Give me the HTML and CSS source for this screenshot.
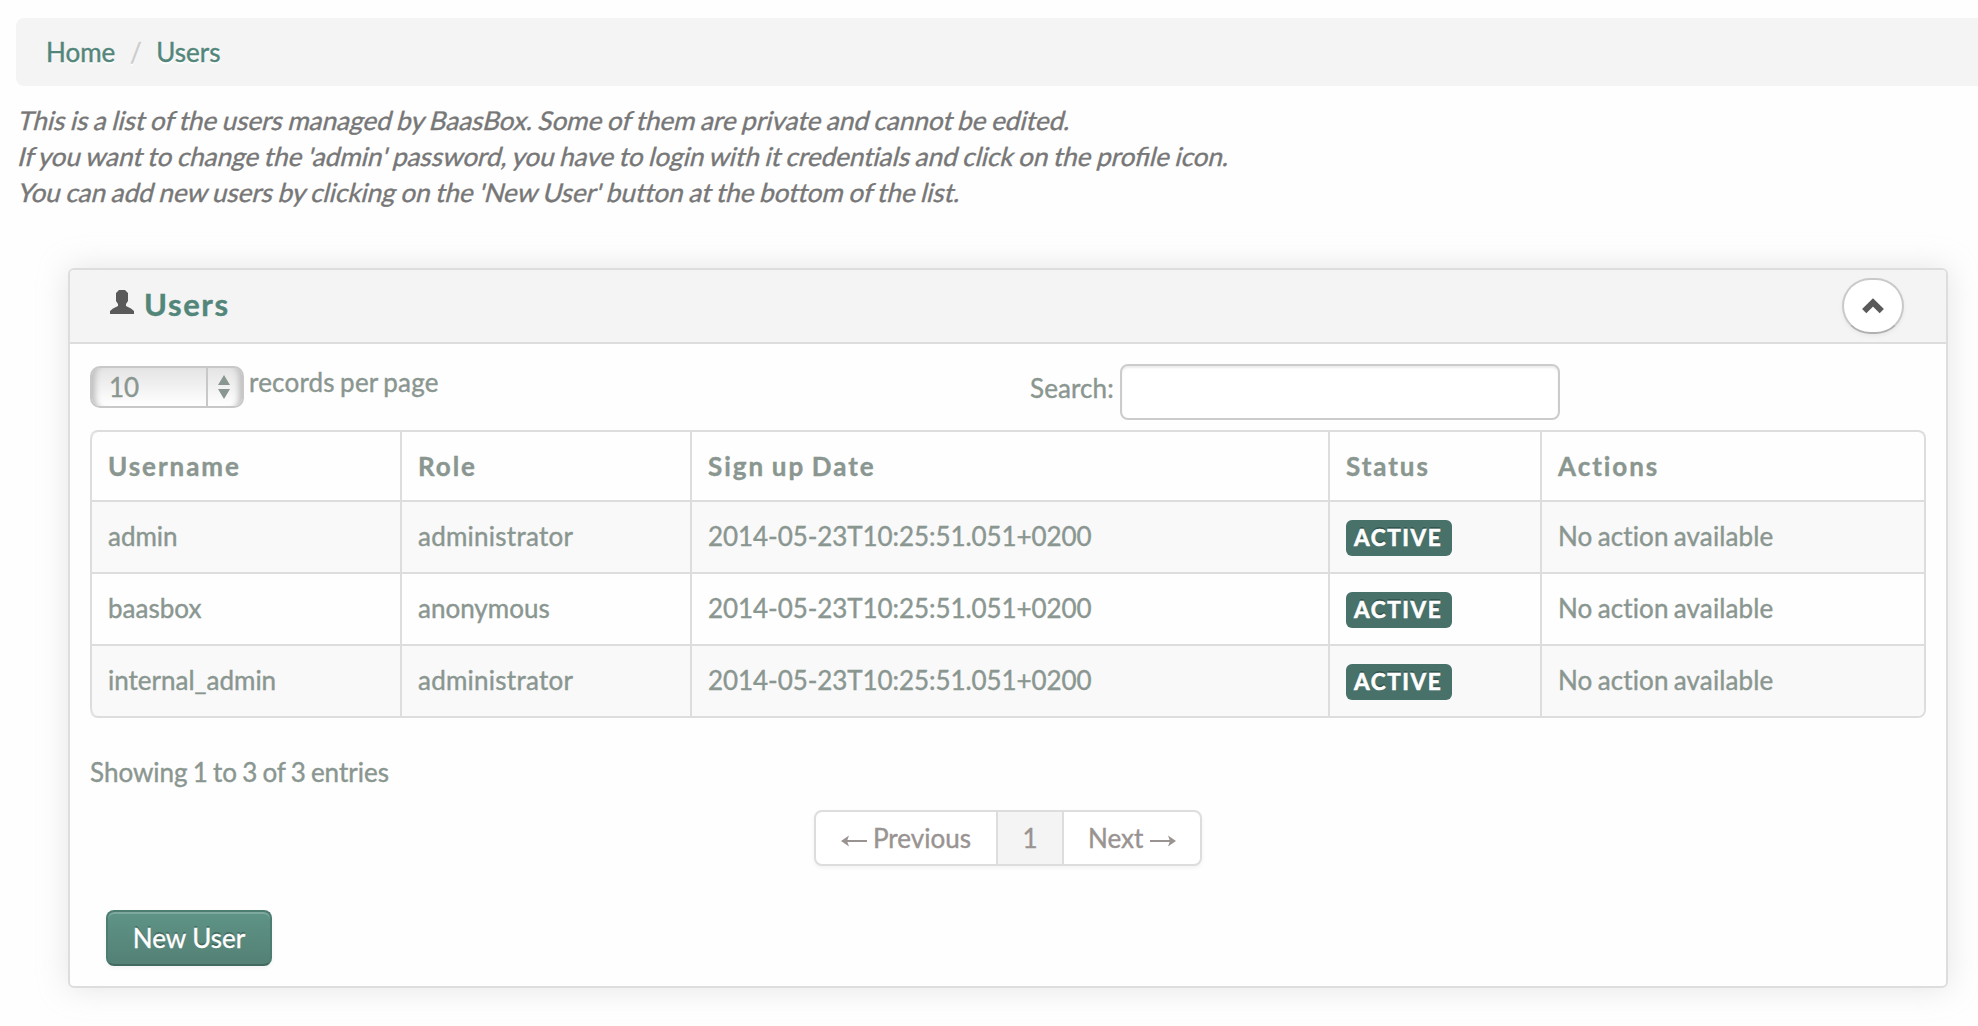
FILE: index.html
```html
<!DOCTYPE html>
<html lang="en">
<head>
<meta charset="utf-8">
<title>Users</title>
<link rel="stylesheet" href="styles.css">
</head>
<body>
<nav class="breadcrumb"><a href="#">Home</a><span class="divider">/</span><a href="#">Users</a></nav>
<p class="intro"><span>This is a list of the users managed by BaasBox. Some of them are private and cannot be edited.</span><span>If you want to change the 'admin' password, you have to login with it credentials and click on the <b>profile</b> icon.</span><span>You can add new users by clicking on the 'New User' button at the bottom of the list.</span></p>
<section class="box">
  <header class="box-header">
    <svg class="icon-user" viewBox="0 0 24 24" width="24" height="24"><path d="M9 0h6l3 3v8l-2 3v2l5 2.500 3 2.500v3H0v-3l3-2.500L8 16v-2l-2-3V3z"/></svg>
    <h2>Users</h2>
    <a class="btn-round" href="#"><svg viewBox="0 0 22 16" width="22" height="16"><path d="M2.200 13.200 11 4.400l8.800 8.800"/></svg></a>
  </header>
  <div class="box-content">
    <div class="controls">
      <div class="length"><span class="select"><span class="value">10</span><span class="arrows"><svg viewBox="0 0 12 24" width="12" height="24"><path d="M0 10 6 0l6 10zM0 14h12L6 24z"/></svg></span></span><span class="per-page">records per page</span></div>
      <label class="search"><span>Search:</span><input type="text"></label>
    </div>
    <table class="users">
      <colgroup><col class="c-name"><col class="c-role"><col class="c-date"><col class="c-status"><col></colgroup>
      <thead><tr><th>Username</th><th>Role</th><th>Sign up Date</th><th>Status</th><th>Actions</th></tr></thead>
      <tbody>
        <tr><td>admin</td><td class="role">administrator</td><td class="date">2014-05-23T10:25:51.051+0200</td><td><span class="label">ACTIVE</span></td><td class="action">No action available</td></tr>
        <tr><td>baasbox</td><td>anonymous</td><td class="date">2014-05-23T10:25:51.051+0200</td><td><span class="label">ACTIVE</span></td><td class="action">No action available</td></tr>
        <tr><td>internal_admin</td><td class="role">administrator</td><td class="date">2014-05-23T10:25:51.051+0200</td><td><span class="label">ACTIVE</span></td><td class="action">No action available</td></tr>
      </tbody>
    </table>
    <div class="info">Showing 1 to 3 of 3 entries</div>
    <div class="pagination">
      <a class="prev" href="#"><svg viewBox="0 0 26 12" width="26" height="12"><path class="shaft" d="M3 6h23"/><path d="M0 6 8 .5 6 6l2 5.500z"/></svg>Previous</a>
      <a class="current" href="#">1</a>
      <a class="next" href="#">Next<svg viewBox="0 0 26 12" width="26" height="12"><path class="shaft" d="M0 6h23"/><path d="M26 6 18 .5 20 6l-2 5.500z"/></svg></a>
    </div>
    <button class="btn-primary">New User</button>
  </div>
</section>
</body>
</html>
```
FILE: styles.css
```css
* { box-sizing: border-box; }
html { overflow: hidden; }
body {
  margin: 0;
  padding-top: 18px;
  height: 1026px;
  overflow: hidden;
  background: #fefefe;
  color: #8a9690;
  font: 26px/36px Lato, "Liberation Sans", sans-serif;
  font-variant-ligatures: none;
  word-spacing: -1.5px;
  -webkit-text-stroke: .4px currentColor;
}
a { color: inherit; text-decoration: none; }
.breadcrumb {
  display: flex;
  align-items: center;
  height: 68px;
  margin-left: 16px;
  padding-left: 30px;
  border-radius: 8px 0 0 8px;
  background: #f4f4f4;
  color: #53867a;
  text-shadow: 0 2px 0 #fff;
}
.divider { width: 41px; text-align: center; color: #ccc; }
.intro { margin: 16px 0 58px 17px; color: #777; white-space: nowrap; word-spacing: -1.100px; }
.intro span { display: block; transform: skewX(-14deg); transform-origin: 0 75%; }
.intro b { font-weight: inherit; font-variant-ligatures: normal; }
.box {
  width: 1880px;
  height: 720px;
  margin-left: 68px;
  border: 2px solid #ddd;
  border-radius: 6px;
  box-shadow: 0 0 30px rgba(189, 189, 189, .4);
}
.box-header {
  display: flex;
  height: 74px;
  padding: 8px 42px 0 39px;
  border-bottom: 2px solid #ddd;
  border-radius: 4px 4px 0 0;
  background: #f4f4f4;
}
.icon-user { margin-top: 12px; margin-left: 1px; fill: #5a5a5a; }
h2 { margin: 8px 0 0 10px; font-size: 31px; line-height: 36px; letter-spacing: 1.600px; color: #53867a; }
.btn-round {
  display: flex;
  align-items: center;
  justify-content: center;
  width: 62px;
  height: 56px;
  margin-left: auto;
  border: 2px solid #c9c9c9;
  border-bottom-color: #b0b0b0;
  border-radius: 28px;
  background: #fff;
  box-shadow: 0 2px 4px rgba(0, 0, 0, .05);
}
.btn-round path { fill: none; stroke: #5a5a5a; stroke-width: 6; }
.box-content { padding: 20px 20px 0; }
.controls { display: flex; height: 66px; }
.length { display: flex; width: 940px; }
.select {
  display: flex;
  width: 154px;
  height: 42px;
  margin-top: 2px;
  border: 2px solid #c8c8c8;
  border-radius: 10px;
  background: linear-gradient(#e4e4e4, #fff);
  box-shadow: inset 9px 0 6px -6px #bbb, inset -9px 0 6px -6px #bbb;
  line-height: 38px;
}
.value { width: 114px; padding-left: 17px; }
.arrows { display: flex; flex: 1; align-items: center; padding-left: 10px; border-left: 2px solid #c8c8c8; }
.arrows path { fill: #8a9690; }
.per-page { margin-left: 5px; letter-spacing: .2px; }
.search { display: flex; gap: 7px; line-height: 49px; }
.search input {
  width: 440px;
  height: 56px;
  border: 2px solid #ccc;
  border-radius: 8px;
  background: #fff;
  box-shadow: inset 0 2px 2px rgba(0, 0, 0, .075);
}
.search span { width: 83px; letter-spacing: .1px; }
.users {
  width: 1836px;
  table-layout: fixed;
  border-collapse: separate;
  border-spacing: 0;
  border: 2px solid #ddd;
  border-left: 0;
  border-radius: 8px;
}
.c-name { width: 310px; }
.c-role { width: 290px; }
.c-date { width: 638px; }
.c-status { width: 212px; }
.users th, .users td { padding: 0 16px; border-left: 2px solid #ddd; text-align: left; white-space: nowrap; }
.users th { height: 68px; letter-spacing: 1.950px; }
.users td { height: 72px; padding-bottom: 2px; border-top: 2px solid #ddd; }
.users tbody tr:nth-child(odd) td { background: #f9f9f9; }
.users .role { letter-spacing: .25px; }
.users .date { letter-spacing: -.07px; }
.users .action { letter-spacing: .12px; }
.users th:first-child { border-top-left-radius: 8px; }
.users tr:last-child td:first-child { border-bottom-left-radius: 8px; }
.users tr:last-child td:last-child { border-bottom-right-radius: 6px; }
.label {
  display: block;
  width: 106px;
  height: 36px;
  margin-top: 4px;
  padding-left: 8px;
  border-radius: 6px;
  background: #48716a;
  color: #fff;
  font-size: 22.500px;
  font-weight: bold;
  letter-spacing: 1.600px;
  line-height: 36px;
  text-shadow: 0 -2px 0 rgba(0, 0, 0, .25);
  -webkit-text-stroke: .6px #fff;
}
.info { margin-top: 36px; }
.pagination {
  display: flex;
  width: 388px;
  height: 56px;
  margin: 20px auto 44px;
  border: 2px solid #ddd;
  border-radius: 8px;
  background: #fff;
  color: #999391;
  box-shadow: 0 2px 4px rgba(0, 0, 0, .05);
  line-height: 52px;
  -webkit-text-stroke-color: #999391;
}
.pagination a { display: flex; align-items: center; }
.pagination svg { margin-top: 6px; fill: currentColor; }
.shaft { stroke: currentColor; stroke-width: 2; }
.prev { width: 180px; padding-left: 25px; gap: 6px; }
.current { justify-content: center; width: 68px; border: solid #ddd; border-width: 0 2px; background: #f4f4f4; }
.next { padding-left: 24px; gap: 7px; }
.btn-primary {
  display: block;
  width: 166px;
  height: 56px;
  margin-left: 16px;
  padding: 0;
  border: 2px solid #4d7d71;
  border-bottom-color: #41695f;
  border-radius: 8px;
  background: linear-gradient(#5e9486, #548075);
  box-shadow: inset 0 2px 0 rgba(255, 255, 255, .2), 0 2px 4px rgba(0, 0, 0, .05);
  color: #fff;
  font: inherit;
  text-shadow: 0 -2px 0 rgba(0, 0, 0, .25);
  -webkit-text-stroke: .35px #fff;
}
```
